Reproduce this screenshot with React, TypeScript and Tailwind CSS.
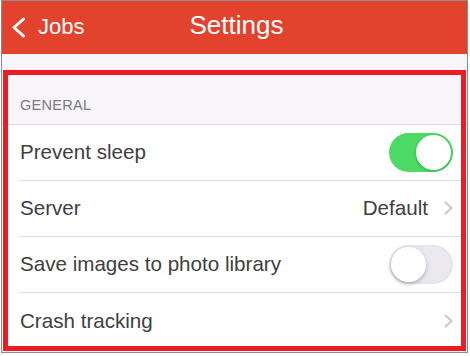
import React from "react";

function Chevron() {
  return (
    <svg width="9" height="14" viewBox="0 0 9 14" fill="none" className="shrink-0">
      <polyline points="1.5,1.5 7.5,7 1.5,12.5" stroke="#c7c7cc" strokeWidth="2" strokeLinecap="round" strokeLinejoin="round" />
    </svg>
  );
}

function Toggle({ on }: { on: boolean }) {
  if (on) {
    return (
      <div className="flex h-[39px] w-[64px] items-center justify-end rounded-full bg-[#4cd964] pr-[2px]">
        <div className="size-[35px] rounded-full bg-white shadow-[0_1px_3px_rgba(0,0,0,0.25)]" />
      </div>
    );
  }
  return (
    <div className="flex h-[39px] w-[64px] items-center rounded-full border-2 border-[#e6e4e9] bg-[#ebe9ee]">
      <div className="size-[35px] rounded-full bg-white shadow-[0_2px_4px_rgba(0,0,0,0.25)]" />
    </div>
  );
}

function Row({ label, children, last }: { label: string; children?: React.ReactNode; last?: boolean }) {
  return (
    <div className="flex h-[56px] bg-white pl-[18px]">
      <div className={"flex flex-1 items-center justify-between pr-[14px] " + (last ? "" : "border-b border-[#dfdee3]")}>
        <span className="text-[20.6px] text-[#404040]">{label}</span>
        {children}
      </div>
    </div>
  );
}

export default function App() {
  return (
    <div className="h-[356px] w-[470px] bg-white font-['Liberation_Sans',Arial,sans-serif]">
      <div className="relative ml-[1px] h-[353px] w-[467px] overflow-hidden border border-[#8d8d8d] bg-[#f7f5f9]">
        <header className="grid h-[53px] grid-cols-[1fr_auto_1fr] items-center bg-[#e3422d] text-white">
          <div className="flex items-center pb-[2px] pl-[9px]">
            <svg width="15" height="21" viewBox="0 0 15 21" fill="none" className="mt-[2px]">
              <polyline points="12.5,2 3,10.5 12.5,19" stroke="white" strokeWidth="3" strokeLinecap="round" strokeLinejoin="round" />
            </svg>
            <span className="ml-[12px] text-[22px] leading-none">Jobs</span>
          </div>
          <div className="pb-[6px] pl-[4px] text-[26px] leading-none">Settings</div>
          <div />
        </header>

        <div className="flex h-[70px] items-end pb-[9px] pl-[18px]">
          <span className="text-[14.5px] leading-[20px] tracking-[0.3px] text-[#7c7b80]">GENERAL</span>
        </div>

        <div className="border-t border-[#dfdee3]">
          <Row label="Prevent sleep">
            <Toggle on />
          </Row>
          <Row label="Server">
            <div className="flex items-center gap-[16px]">
              <span className="text-[20.6px] text-[#404040]">Default</span>
              <Chevron />
            </div>
          </Row>
          <Row label="Save images to photo library">
            <Toggle on={false} />
          </Row>
          <Row label="Crash tracking" last>
            <Chevron />
          </Row>
        </div>

        <div className="pointer-events-none absolute bottom-[1px] left-[1px] right-[1px] top-[69px] border-[5px] border-[#ed1c24]" />
      </div>
    </div>
  );
}
